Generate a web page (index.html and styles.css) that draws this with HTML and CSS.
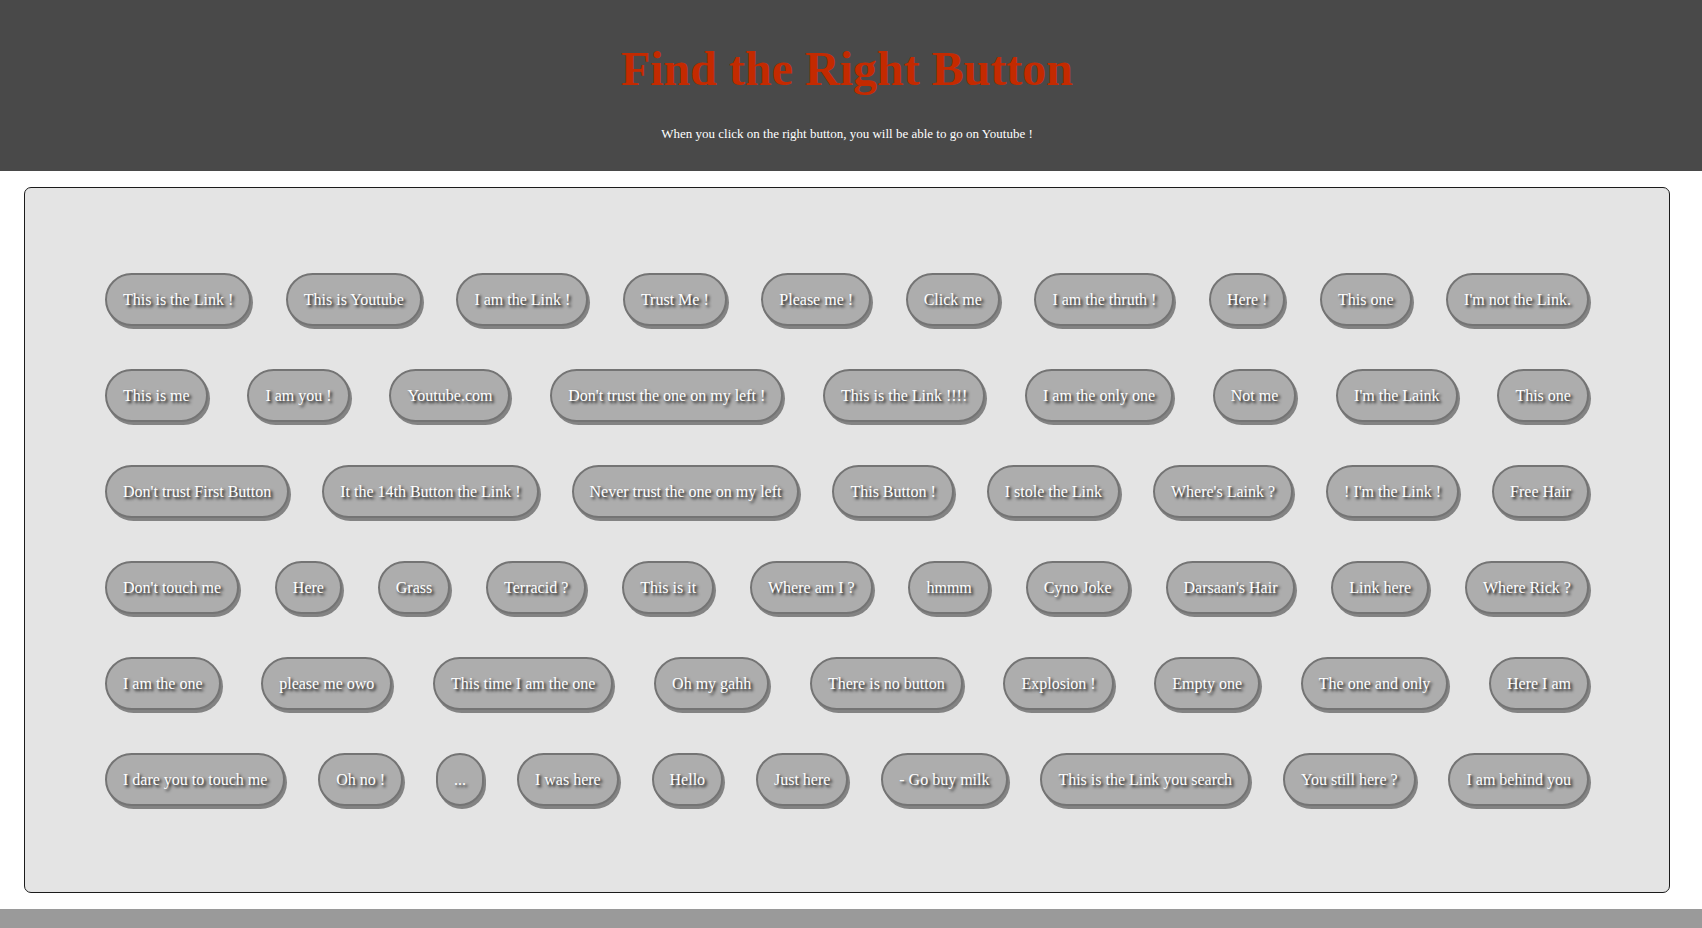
FILE: index.html
```
<!DOCTYPE html>
<html lang="en">
<head>
<meta charset="utf-8">
<title>Find the Right Button</title>
<link rel="stylesheet" href="styles.css">
</head>
<body>
<header class="header">
  <h1 class="title">Find the Right Button</h1>
  <p class="subtitle">When you click on the right button, you will be able to go on Youtube !</p>
</header>
<main class="board">
  <button class="pill">This is the Link !</button>
  <button class="pill">This is Youtube</button>
  <button class="pill">I am the Link !</button>
  <button class="pill">Trust Me !</button>
  <button class="pill">Please me !</button>
  <button class="pill">Click me</button>
  <button class="pill">I am the thruth !</button>
  <button class="pill">Here !</button>
  <button class="pill">This one</button>
  <button class="pill">I'm not the Link.</button>
  <button class="pill">This is me</button>
  <button class="pill">I am you !</button>
  <button class="pill">Youtube.com</button>
  <button class="pill">Don't trust the one on my left !</button>
  <button class="pill">This is the Link !!!!</button>
  <button class="pill">I am the only one</button>
  <button class="pill">Not me</button>
  <button class="pill">I'm the Laink</button>
  <button class="pill">This one</button>
  <button class="pill">Don't trust First Button</button>
  <button class="pill">It the 14th Button the Link !</button>
  <button class="pill">Never trust the one on my left</button>
  <button class="pill">This Button !</button>
  <button class="pill">I stole the Link</button>
  <button class="pill">Where's Laink ?</button>
  <button class="pill">! I'm the Link !</button>
  <button class="pill">Free Hair</button>
  <button class="pill">Don't touch me</button>
  <button class="pill">Here</button>
  <button class="pill">Grass</button>
  <button class="pill">Terracid ?</button>
  <button class="pill">This is it</button>
  <button class="pill">Where am I ?</button>
  <button class="pill">hmmm</button>
  <button class="pill">Cyno Joke</button>
  <button class="pill">Darsaan's Hair</button>
  <button class="pill">Link here</button>
  <button class="pill">Where Rick ?</button>
  <button class="pill">I am the one</button>
  <button class="pill">please me owo</button>
  <button class="pill">This time I am the one</button>
  <button class="pill">Oh my gahh</button>
  <button class="pill">There is no button</button>
  <button class="pill">Explosion !</button>
  <button class="pill">Empty one</button>
  <button class="pill">The one and only</button>
  <button class="pill">Here I am</button>
  <button class="pill">I dare you to touch me</button>
  <button class="pill">Oh no !</button>
  <button class="pill">...</button>
  <button class="pill">I was here</button>
  <button class="pill">Hello</button>
  <button class="pill">Just here</button>
  <button class="pill">- Go buy milk</button>
  <button class="pill">This is the Link you search</button>
  <button class="pill">You still here ?</button>
  <button class="pill">I am behind you</button>
</main>
<footer class="footer"></footer>
</body>
</html>
```
FILE: styles.css
```
* {
  box-sizing: border-box;
}

body {
  margin: 0;
  min-height: 100vh;
  display: flex;
  flex-direction: column;
  background: #fff;
  font-family: "Liberation Serif", "Times New Roman", serif;
}

.header {
  padding: 41px 8px 29px 0;
  background: #494949;
  text-align: center;
}

.title {
  margin: 0;
  font-size: 48px;
  line-height: 56px;
  color: #c42a00;
}

.subtitle {
  margin: 28px 0 0;
  font-size: 13px;
  line-height: 17px;
  color: #fff;
}

.board {
  margin: 16px 32px 16px 24px;
  padding: 85px 80px 86px;
  display: flex;
  flex-wrap: wrap;
  justify-content: space-between;
  gap: 43px 30px;
  background: #e4e4e4;
  border: 1px solid #1c1c1c;
  border-radius: 7px;
}

.pill {
  padding: 16px;
  font-family: inherit;
  font-size: 16px;
  line-height: 17px;
  color: #fff;
  text-shadow: 2px 2px 3px #000;
  background: #adadad;
  border: 2px solid #747474;
  border-radius: 27px;
  box-shadow: 2px 3px 0 #838383;
  cursor: pointer;
}

.footer {
  flex: 1;
  background: #9a9a9a;
}
```
